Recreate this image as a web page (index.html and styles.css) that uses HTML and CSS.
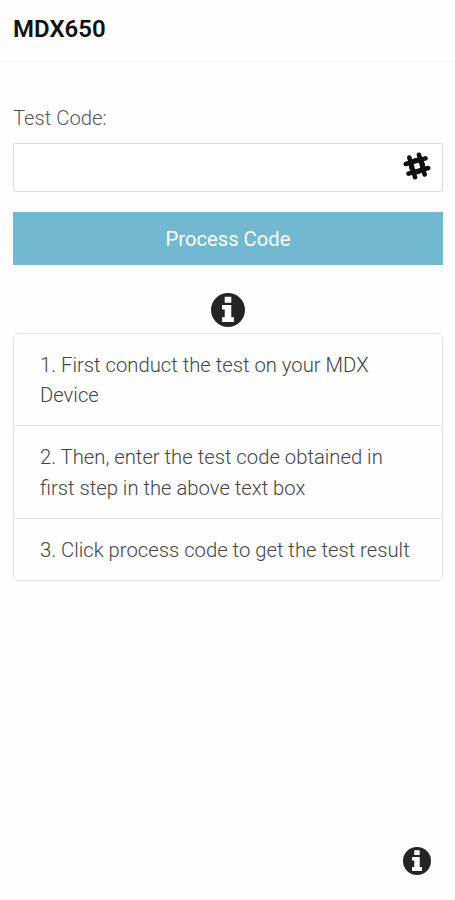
FILE: index.html
```html
<!DOCTYPE html>
<html lang="en">
<head>
  <meta charset="UTF-8">
  <meta name="viewport" content="width=device-width, initial-scale=1">
  <title>MDX650</title>
  <link rel="stylesheet" href="styles.css">
</head>
<body>

  <header class="header">
    <h1>MDX650</h1>
  </header>

  <main class="content">
    <label for="test-code">Test Code:</label>
    <div class="code-box">
      <input type="text" id="test-code">
      <svg class="hash-icon" viewBox="0 0 28 28">
        <g transform="rotate(-16 14 14)">
          <path d="M9 3.8V24.2M19 3.8V24.2M3.8 9H24.2M3.8 19H24.2"/>
          <circle cx="14" cy="14" r="6"/>
        </g>
      </svg>
    </div>

    <button class="btn-process" type="button">Process Code</button>

    <svg class="info-icon" viewBox="0 0 34 34">
      <circle cx="17" cy="17" r="17"/>
      <path d="M13.7 3.8H20.3V9.8H13.7ZM11 12H20.3V24.2H23V29H11V24.2H13.7V16.5H11Z"/>
    </svg>

    <ul class="steps">
      <li>1. First conduct the test on your MDX Device</li>
      <li>2. Then, enter the test code obtained in first step in the above text box</li>
      <li>3. Click process code to get the test result</li>
    </ul>
  </main>

  <footer class="footer">
    <svg class="info-icon-small" viewBox="0 0 34 34">
      <circle cx="17" cy="17" r="17"/>
      <path d="M13.7 3.8H20.3V9.8H13.7ZM11 12H20.3V24.2H23V29H11V24.2H13.7V16.5H11Z"/>
    </svg>
  </footer>

</body>
</html>
```

FILE: styles.css
```css
* {
  box-sizing: border-box;
}
body {
  display: flex;
  flex-direction: column;
  height: 100vh;
  margin: 0;
  font-family: Roboto, sans-serif;
  font-size: 20.25px;
  font-weight: 300;
  line-height: 30px;
  color: #444;
  background-color: #fefefe;
}
.header {
  height: 62px;
  padding: 14px 13px;
  border-bottom: 1px solid #f7f7f7;
}
h1 {
  margin: 0;
  font-size: 24px;
  font-weight: 600;
  line-height: 30px;
  color: #111;
}
.content {
  flex: 1;
  padding: 41px 12px 0 13px;
}
label {
  display: block;
  height: 40px;
  color: #555;
}
.code-box {
  display: flex;
  align-items: center;
  height: 49px;
  padding-right: 11px;
  background: white;
  border: 1px solid #dcdcdc;
  border-radius: 2px;
}
.code-box input {
  flex: 1;
  min-width: 0;
  height: 100%;
  padding: 0 12px;
  border: none;
  outline: none;
  background: transparent;
  font: inherit;
}
.hash-icon {
  width: 28px;
  height: 28px;
  margin-bottom: 4px;
  fill: none;
  stroke: #111;
  stroke-width: 4.6;
  stroke-linecap: round;
}
.hash-icon circle {
  stroke-width: 4.5;
}
.btn-process {
  display: block;
  width: 100%;
  height: 53px;
  margin-top: 20px;
  padding: 0;
  border: none;
  background-color: #72b8d1;
  color: white;
  font-family: inherit;
  font-size: 20.2px;
  font-weight: 400;
}
.info-icon {
  display: block;
  width: 34px;
  height: 34px;
  margin: 28px auto 6px;
}
.info-icon circle,
.info-icon-small circle {
  fill: #222426;
}
.info-icon path,
.info-icon-small path {
  fill: white;
}
.steps {
  margin: 0;
  padding: 0;
  list-style: none;
  border: 1px solid #e4e4e4;
  border-radius: 5px;
}
.steps li {
  padding: 16px 26px 15px;
  line-height: 30.2px;
}
.steps li + li {
  border-top: 1px solid #e4e4e4;
}
.footer {
  display: flex;
  justify-content: flex-end;
  padding: 0 24px 25px;
}
.info-icon-small {
  width: 28px;
  height: 28px;
}
```
